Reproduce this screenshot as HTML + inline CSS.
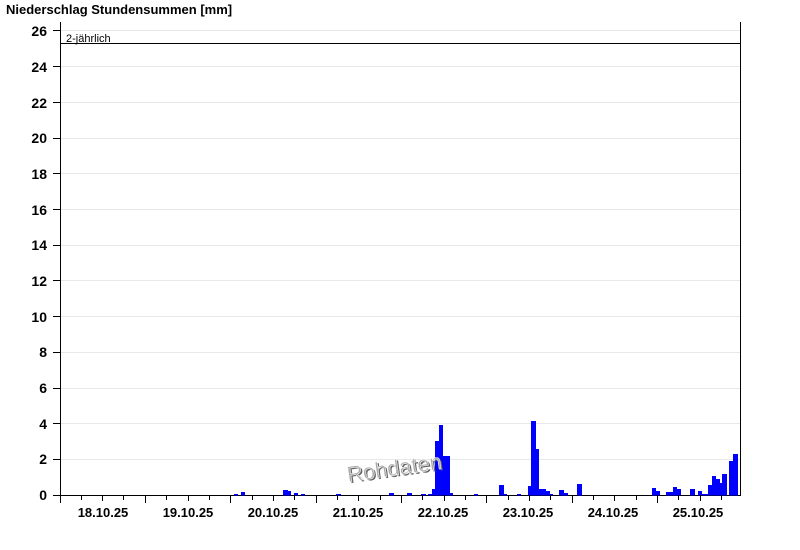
<!DOCTYPE html>
<html><head><meta charset="utf-8"><style>
html,body{margin:0;padding:0;background:#fff;width:800px;height:550px;overflow:hidden}
svg text{font-family:"Liberation Sans",Arial,sans-serif}
</style></head><body>
<svg width="800" height="550" xmlns="http://www.w3.org/2000/svg">
<text x="6" y="14" font-size="13" font-weight="bold">Niederschlag Stundensummen [mm]</text>
<g stroke="#e8e8e8" stroke-width="1">
<line x1="60" x2="740" y1="30.5" y2="30.5"/><line x1="60" x2="740" y1="66.5" y2="66.5"/><line x1="60" x2="740" y1="102.5" y2="102.5"/><line x1="60" x2="740" y1="138.5" y2="138.5"/><line x1="60" x2="740" y1="173.5" y2="173.5"/><line x1="60" x2="740" y1="209.5" y2="209.5"/><line x1="60" x2="740" y1="245.5" y2="245.5"/><line x1="60" x2="740" y1="280.5" y2="280.5"/><line x1="60" x2="740" y1="316.5" y2="316.5"/><line x1="60" x2="740" y1="352.5" y2="352.5"/><line x1="60" x2="740" y1="388.5" y2="388.5"/><line x1="60" x2="740" y1="423.5" y2="423.5"/><line x1="60" x2="740" y1="459.5" y2="459.5"/>
</g>
<g font-size="14" font-weight="bold" text-anchor="end">
<text x="47" y="36">26</text><text x="47" y="72">24</text><text x="47" y="108">22</text><text x="47" y="143">20</text><text x="47" y="179">18</text><text x="47" y="215">16</text><text x="47" y="250">14</text><text x="47" y="286">12</text><text x="47" y="322">10</text><text x="47" y="357">8</text><text x="47" y="393">6</text><text x="47" y="429">4</text><text x="47" y="464">2</text><text x="47" y="500">0</text>
</g>
<g stroke="#000" stroke-width="1">
<line x1="53" x2="60" y1="30.5" y2="30.5"/><line x1="53" x2="60" y1="66.5" y2="66.5"/><line x1="53" x2="60" y1="102.5" y2="102.5"/><line x1="53" x2="60" y1="138.5" y2="138.5"/><line x1="53" x2="60" y1="173.5" y2="173.5"/><line x1="53" x2="60" y1="209.5" y2="209.5"/><line x1="53" x2="60" y1="245.5" y2="245.5"/><line x1="53" x2="60" y1="280.5" y2="280.5"/><line x1="53" x2="60" y1="316.5" y2="316.5"/><line x1="53" x2="60" y1="352.5" y2="352.5"/><line x1="53" x2="60" y1="388.5" y2="388.5"/><line x1="53" x2="60" y1="423.5" y2="423.5"/><line x1="53" x2="60" y1="459.5" y2="459.5"/><line x1="53" x2="60" y1="495.5" y2="495.5"/>
<line x1="60.5" x2="60.5" y1="22" y2="503"/>
<line x1="740.5" x2="740.5" y1="22" y2="496"/>
<line x1="60" x2="741" y1="43.5" y2="43.5"/>
<line x1="53" x2="741" y1="495.5" y2="495.5"/>
</g>
<text x="66" y="42" font-size="11">2-jährlich</text>
<g fill="#0000ff">
<rect x="234" y="494" width="4" height="1.5"/><rect x="241" y="492" width="4" height="3.5"/>
<rect x="283" y="490" width="5" height="5.5"/><rect x="288" y="491" width="3" height="4.5"/><rect x="294" y="493" width="4" height="2.5"/><rect x="301" y="494" width="4" height="1.5"/>
<rect x="336" y="494" width="5" height="1.5"/><rect x="389" y="493" width="5" height="2.5"/><rect x="407" y="493" width="5" height="2.5"/><rect x="421" y="494" width="5" height="1.5"/><rect x="428" y="494" width="4" height="1.5"/>
<rect x="432" y="489" width="3" height="6.5"/><rect x="435" y="441" width="4" height="54.5"/><rect x="439" y="425" width="4" height="70.5"/><rect x="443" y="456" width="4" height="39.5"/><rect x="447" y="456" width="3" height="39.5"/><rect x="450" y="493" width="3" height="2.5"/>
<rect x="474" y="494" width="4" height="1.5"/>
<rect x="499" y="485" width="5" height="10.5"/><rect x="504" y="494" width="3" height="1.5"/><rect x="517" y="494" width="4" height="1.5"/>
<rect x="528" y="486" width="3" height="9.5"/><rect x="531" y="421" width="5" height="74.5"/><rect x="536" y="449" width="3" height="46.5"/><rect x="539" y="489" width="7" height="6.5"/><rect x="546" y="491" width="4" height="4.5"/><rect x="550" y="494" width="3" height="1.5"/>
<rect x="559" y="490" width="5" height="5.5"/><rect x="564" y="493" width="4" height="2.5"/><rect x="577" y="484" width="5" height="11.5"/>
<rect x="652" y="488" width="4" height="7.5"/><rect x="656" y="491" width="4" height="4.5"/><rect x="666" y="492" width="7" height="3.5"/><rect x="673" y="487" width="4" height="8.5"/><rect x="677" y="489" width="4" height="6.5"/>
<rect x="690" y="489" width="5" height="6.5"/><rect x="698" y="491" width="4" height="4.5"/><rect x="702" y="494" width="6" height="1.5"/><rect x="708" y="485" width="4" height="10.5"/><rect x="712" y="476" width="4" height="19.5"/><rect x="716" y="479" width="4" height="16.5"/><rect x="720" y="483" width="2" height="12.5"/><rect x="722" y="474" width="5" height="21.5"/><rect x="729" y="461" width="4" height="34.5"/><rect x="733" y="454" width="5" height="41.5"/>
</g>
<g stroke="#000" stroke-width="1">
<line x1="60.5" x2="60.5" y1="495" y2="503"/><line x1="81.5" x2="81.5" y1="495" y2="500"/><line x1="102.5" x2="102.5" y1="495" y2="501"/><line x1="123.5" x2="123.5" y1="495" y2="500"/>
<line x1="145.5" x2="145.5" y1="495" y2="503"/><line x1="166.5" x2="166.5" y1="495" y2="500"/><line x1="188.5" x2="188.5" y1="495" y2="501"/><line x1="209.5" x2="209.5" y1="495" y2="500"/>
<line x1="230.5" x2="230.5" y1="495" y2="503"/><line x1="252.5" x2="252.5" y1="495" y2="500"/><line x1="273.5" x2="273.5" y1="495" y2="501"/><line x1="294.5" x2="294.5" y1="495" y2="500"/>
<line x1="316.5" x2="316.5" y1="495" y2="503"/><line x1="337.5" x2="337.5" y1="495" y2="500"/><line x1="358.5" x2="358.5" y1="495" y2="501"/><line x1="380.5" x2="380.5" y1="495" y2="500"/>
<line x1="401.5" x2="401.5" y1="495" y2="503"/><line x1="422.5" x2="422.5" y1="495" y2="500"/><line x1="444.5" x2="444.5" y1="495" y2="501"/><line x1="465.5" x2="465.5" y1="495" y2="500"/>
<line x1="486.5" x2="486.5" y1="495" y2="503"/><line x1="508.5" x2="508.5" y1="495" y2="500"/><line x1="529.5" x2="529.5" y1="495" y2="501"/><line x1="550.5" x2="550.5" y1="495" y2="500"/>
<line x1="572.5" x2="572.5" y1="495" y2="503"/><line x1="593.5" x2="593.5" y1="495" y2="500"/><line x1="614.5" x2="614.5" y1="495" y2="501"/><line x1="636.5" x2="636.5" y1="495" y2="500"/>
<line x1="657.5" x2="657.5" y1="495" y2="503"/><line x1="678.5" x2="678.5" y1="495" y2="500"/><line x1="700.5" x2="700.5" y1="495" y2="501"/><line x1="721.5" x2="721.5" y1="495" y2="500"/>
</g>
<g font-size="13" font-weight="bold" text-anchor="middle">
<text x="103" y="517">18.10.25</text><text x="188" y="517">19.10.25</text><text x="273" y="517">20.10.25</text><text x="358" y="517">21.10.25</text><text x="443" y="517">22.10.25</text><text x="528" y="517">23.10.25</text><text x="613" y="517">24.10.25</text><text x="698" y="517">25.10.25</text>
</g>
<g transform="translate(348,482) rotate(-8)">
<text x="1.5" y="1.5" font-size="22" fill="#666">Rohdaten</text>
<text x="0" y="0" font-size="22" fill="#aaa" stroke="#fff" stroke-width="0.5">Rohdaten</text>
</g>
</svg>
</body></html>
